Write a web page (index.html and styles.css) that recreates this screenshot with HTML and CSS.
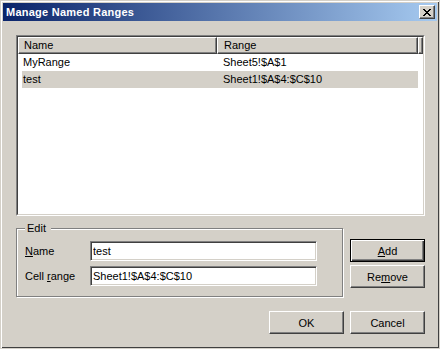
FILE: index.html
```html
<!DOCTYPE html>
<html lang="en">
<head>
    <meta charset="UTF-8">
    <meta name="viewport" content="width=device-width, initial-scale=1.0">
    <title>Manage Named Ranges</title>
    <link rel="stylesheet" href="styles.css">
</head>
<body>
    <div class="window">
        <div class="titlebar">
            <span class="title">Manage Named Ranges</span>
            <button class="close-btn" aria-label="Close">
                <svg width="8" height="7" viewBox="0 0 8 7">
                    <path d="M0 0h2v1h-2zM6 0h2v1h-2zM1 1h2v1h-2zM5 1h2v1h-2zM2 2h4v1h-4zM3 3h2v1h-2zM2 4h4v1h-4zM1 5h2v1h-2zM5 5h2v1h-2zM0 6h2v1h-2zM6 6h2v1h-2z" fill="#000"/>
                </svg>
            </button>
        </div>

        <div class="content">
            <div class="listview">
                <div class="listview-inner">
                    <div class="lv-header">
                        <div class="lv-col col-name">Name</div>
                        <div class="lv-col col-range">Range</div>
                        <div class="lv-col col-fill"></div>
                    </div>
                    <div class="lv-row">
                        <div class="cell cell-name">MyRange</div>
                        <div class="cell cell-range">Sheet5!$A$1</div>
                    </div>
                    <div class="lv-row selected">
                        <div class="cell cell-name">test</div>
                        <div class="cell cell-range">Sheet1!$A$4:$C$10</div>
                    </div>
                </div>
            </div>

            <div class="middle">
                <div class="group">
                    <span class="legend">Edit</span>
                    <div class="group-body">
                        <label for="name-input"><u>N</u>ame</label>
                        <input type="text" id="name-input" value="test">
                        <label for="range-input">Cell <u>r</u>ange</label>
                        <input type="text" id="range-input" value="Sheet1!$A$4:$C$10">
                    </div>
                </div>
                <div class="side-buttons">
                    <button class="btn default"><u>A</u>dd</button>
                    <button class="btn">Re<u>m</u>ove</button>
                </div>
            </div>

            <div class="footer">
                <button class="btn">OK</button>
                <button class="btn">Cancel</button>
            </div>
        </div>
    </div>
</body>
</html>
```

FILE: styles.css
```css
body {
    margin: 0;
    padding: 0;
    font-family: "Liberation Sans", Arial, sans-serif;
    font-size: 11px;
    color: #000;
    background: #D4D0C8;
}
.window {
    width: 440px;
    height: 349px;
    box-sizing: border-box;
    background: #D4D0C8;
    border: 1px solid #D4D0C8;
    box-shadow: inset 1px 1px #fff, inset -1px -1px #404040;
    padding: 2px;
}
.titlebar {
    height: 18px;
    display: flex;
    align-items: center;
    justify-content: space-between;
    background: linear-gradient(to right, #0A246A, #A6CAF0);
    padding-left: 3px;
    padding-right: 2px;
}
.title {
    color: #fff;
    font-weight: bold;
    font-size: 11px;
    line-height: 13px;
    letter-spacing: 0.25px;
}
.close-btn {
    width: 16px;
    height: 14px;
    padding: 0;
    margin: 0;
    background: #D4D0C8;
    border: 1px solid;
    border-color: #fff #404040 #404040 #fff;
    box-shadow: inset -1px -1px #808080;
    display: flex;
    align-items: center;
    justify-content: center;
}
.close-btn svg {
    display: block;
}
.content {
    padding: 14px 12px 0 13px;
}

/* list view */
.listview {
    width: 409px;
    height: 181px;
    box-sizing: border-box;
    border: 1px solid;
    border-color: #808080 #fff #fff #808080;
}
.listview-inner {
    height: 100%;
    box-sizing: border-box;
    border: 1px solid;
    border-color: #404040 #D4D0C8 #D4D0C8 #404040;
    background: #fff;
}
.lv-header {
    display: flex;
    height: 17px;
}
.lv-col {
    box-sizing: border-box;
    height: 17px;
    line-height: 14px;
    background: #D4D0C8;
    border: 1px solid;
    border-color: #fff #404040 #404040 #fff;
    box-shadow: inset -1px -1px #808080;
    white-space: nowrap;
}
.col-name {
    width: 199px;
    padding-left: 5px;
}
.col-range {
    width: 201px;
    padding-left: 6px;
}
.col-fill {
    flex: 1;
}
.lv-row {
    display: flex;
    height: 17px;
    line-height: 17px;
    margin-left: 4px;
    width: 396px;
}
.lv-row.selected {
    background: #D4D0C8;
}
.cell-name {
    width: 195px;
    padding-left: 1px;
    box-sizing: border-box;
}
.cell-range {
    padding-left: 6px;
}

/* edit group + side buttons */
.middle {
    display: flex;
    margin-top: 12px;
}
.group {
    width: 327px;
    height: 69px;
    box-sizing: border-box;
    border: 1px solid #808080;
    box-shadow: inset 1px 1px #fff, 1px 1px #fff;
    display: flex;
    flex-direction: column;
    align-items: flex-start;
}
.legend {
    background: #D4D0C8;
    line-height: 13px;
    margin: -7px 0 -6px 8px;
    padding: 0 5px 0 2px;
}
.group-body {
    display: grid;
    grid-template-columns: 65px 227px;
    row-gap: 5px;
    align-items: center;
    padding: 12px 0 0 8px;
}
.group-body input {
    width: 227px;
    height: 20px;
    box-sizing: border-box;
    margin: 0;
    padding: 0 2px;
    font-family: "Liberation Sans", Arial, sans-serif;
    font-size: 11px;
    color: #000;
    background: #fff;
    border: 1px solid;
    border-color: #808080 #fff #fff #808080;
    box-shadow: inset 1px 1px #404040, inset -1px -1px #D4D0C8;
    outline: none;
}
.side-buttons {
    display: flex;
    flex-direction: column;
    gap: 3px;
    margin: 11px 0 0 7px;
}
.btn {
    width: 75px;
    height: 23px;
    box-sizing: border-box;
    padding: 0;
    margin: 0;
    font-family: "Liberation Sans", Arial, sans-serif;
    font-size: 11px;
    color: #000;
    background: #D4D0C8;
    border: 1px solid;
    border-color: #fff #404040 #404040 #fff;
    box-shadow: inset -1px -1px #808080;
}
.btn.default {
    border: 1px solid #000;
    box-shadow: inset 1px 1px #fff, inset -1px -1px #404040, inset -2px -2px #808080;
}
.footer {
    display: flex;
    justify-content: flex-end;
    gap: 6px;
    margin-top: 14px;
}
```
